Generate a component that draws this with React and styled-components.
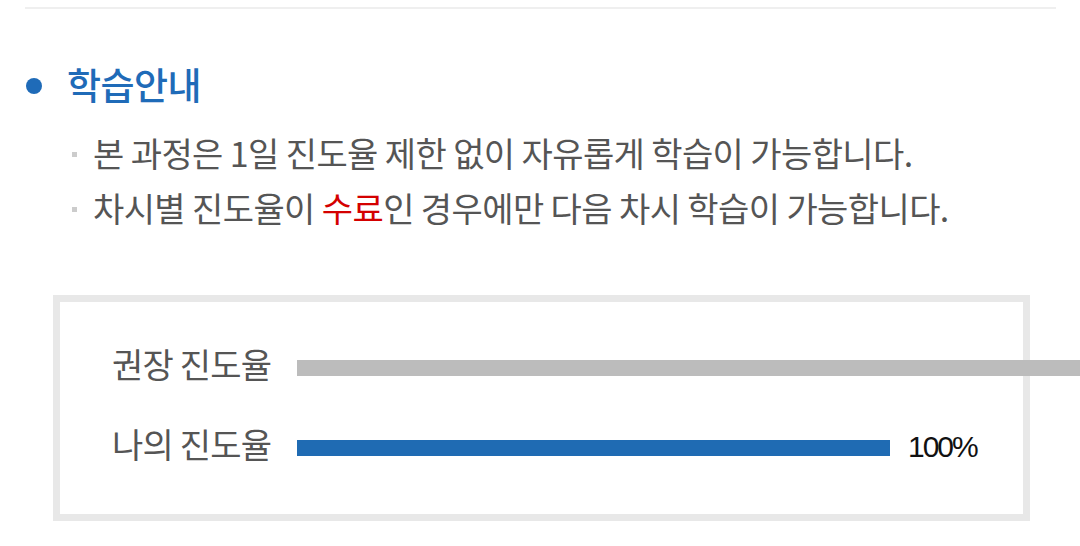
import React from "react";
import styled, { createGlobalStyle } from "styled-components";

const Global = createGlobalStyle`
  html, body { margin: 0; padding: 0; background: #fff; overflow: hidden; }
  body { font-family: "Noto Sans CJK KR", "Noto Sans", sans-serif; }
`;

const Page = styled.div`
  width: 1080px;
  height: 546px;
  overflow: hidden;
  padding-top: 7px;
  box-sizing: border-box;
`;

const TopRule = styled.div`
  height: 2px;
  background: #efefef;
  margin: 0 24px 0 25px;
`;

const Heading = styled.h2`
  display: flex;
  align-items: center;
  gap: 25px;
  margin: 55px 0 0 26px;
  height: 40px;
  font-size: 37px;
  line-height: 40px;
  font-weight: 500;
  color: #1f6bb8;
  letter-spacing: -0.5px;
`;

const Dot = styled.span`
  width: 16px;
  height: 16px;
  border-radius: 50%;
  background: #1f6bb8;
  flex: none;
  margin-top: 4px;
`;

const List = styled.ul`
  list-style: none;
  margin: 21px 0 0 72px;
  padding: 0;
`;

const Item = styled.li`
  display: flex;
  align-items: center;
  gap: 16px;
  height: 55px;
  font-size: 34px;
  line-height: 55px;
  color: #555;
  letter-spacing: -0.6px;
`;

const Square = styled.span`
  width: 5px;
  height: 5px;
  background: #ccc;
  flex: none;
  margin-top: 4px;
`;

const Red = styled.span`
  color: #d40000;
`;

const Box = styled.div`
  margin: 60px 0 0 53px;
  width: 977px;
  height: 226px;
  box-sizing: border-box;
  border: 7px solid #e8e8e8;
  padding: 42px 0 0 52px;
  display: flex;
  flex-direction: column;
  gap: 40px;
`;

const Row = styled.div`
  display: flex;
  align-items: center;
  height: 40px;
`;

const Label = styled.span`
  width: 185px;
  flex: none;
  font-size: 34px;
  line-height: 40px;
  color: #555;
  letter-spacing: -0.8px;
`;

const Bar = styled.div`
  height: 16px;
  flex: none;
  width: ${(p) => p.$width}px;
  background: ${(p) => p.$color};
  margin-top: 7px;
`;

const Percent = styled.span`
  margin-left: 18px;
  margin-top: 6px;
  font-family: "Liberation Sans", Arial, sans-serif;
  font-size: 30px;
  letter-spacing: -2px;
  color: #111;
`;

export default function App() {
  return (
    <>
      <Global />
      <Page>
        <TopRule />
        <Heading>
          <Dot />
          학습안내
        </Heading>
        <List>
          <Item>
            <Square />
            <span>본 과정은 1일 진도율 제한 없이 자유롭게 학습이 가능합니다.</span>
          </Item>
          <Item>
            <Square />
            <span>
              차시별 진도율이 <Red>수료</Red>인 경우에만 다음 차시 학습이 가능합니다.
            </span>
          </Item>
        </List>
        <Box>
          <Row>
            <Label>권장 진도율</Label>
            <Bar $width={800} $color="#bcbcbc" />
          </Row>
          <Row>
            <Label>나의 진도율</Label>
            <Bar $width={593} $color="#1f6bb3" />
            <Percent>100%</Percent>
          </Row>
        </Box>
      </Page>
    </>
  );
}
